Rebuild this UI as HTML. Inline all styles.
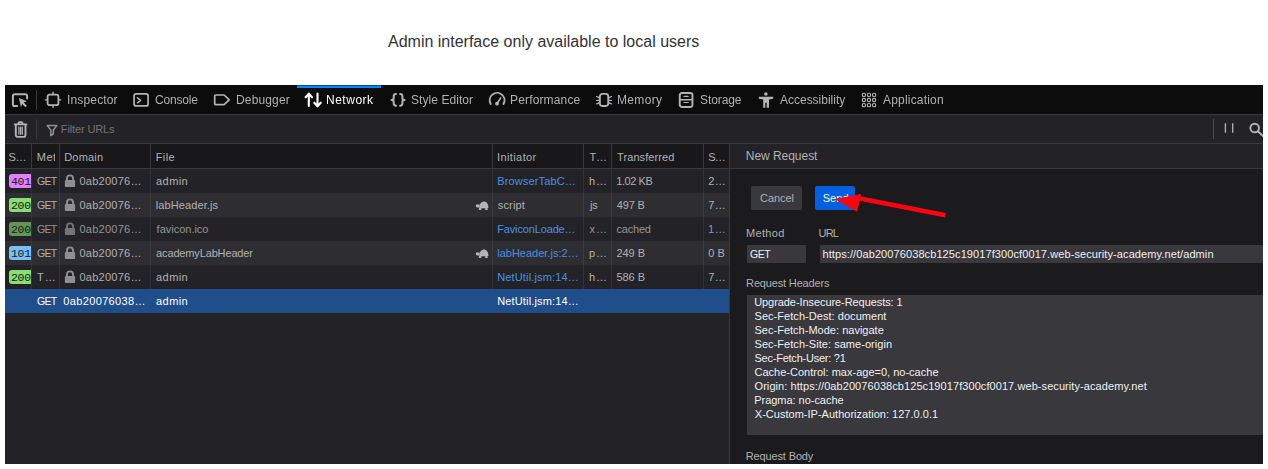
<!DOCTYPE html>
<html lang="en">
<head>
<meta charset="utf-8">
<title>Admin interface</title>
<style>
*{box-sizing:border-box;margin:0;padding:0}
html,body{width:1268px;height:469px;overflow:hidden;background:#fff}
body{font-family:"Liberation Sans",sans-serif;position:relative}
#msg{position:absolute;left:388px;top:32px;font-size:16px;line-height:19px;color:#333;white-space:nowrap}
.b{position:absolute}
.t{position:absolute;white-space:nowrap}
.st{position:absolute;left:9px;width:22px;height:14px;border-radius:3px 0 0 3px;font-family:"Liberation Mono",monospace;font-size:11.5px;line-height:15px;color:#18181a;overflow:hidden;padding-left:2px;letter-spacing:-0.3px}
svg{position:absolute;overflow:visible}
</style>
</head>
<body>
<div id="msg">Admin interface only available to local users</div>
<div class="b" style="left:5px;top:85px;width:1258px;height:379px;background:#232327;"></div>
<div class="b" style="left:5px;top:85px;width:1258px;height:29px;background:#0c0c0d;"></div>
<div class="b" style="left:5px;top:114px;width:1258px;height:1px;background:#38383d;"></div>
<div class="b" style="left:297px;top:85px;width:84px;height:3px;background:#0a84ff;"></div>
<div class="b" style="left:297px;top:85px;width:84px;height:1px;background:#0b4886;"></div>
<div class="b" style="left:36px;top:90px;width:1px;height:20px;background:#38383d;"></div>
<div class="b" style="left:5px;top:115px;width:1258px;height:28px;background:#232327;"></div>
<div class="b" style="left:5px;top:143px;width:1258px;height:1px;background:#38383d;"></div>
<div class="b" style="left:36px;top:119px;width:1px;height:20px;background:#38383d;"></div>
<div class="b" style="left:1213px;top:119px;width:1px;height:20px;background:#4a4a4f;"></div>
<div class="b" style="left:5px;top:144px;width:724px;height:24px;background:#18181a;"></div>
<div class="b" style="left:5px;top:168px;width:1258px;height:1px;background:#38383d;"></div>
<div class="b" style="left:5px;top:193px;width:724px;height:24px;background:#2e2e32;"></div>
<div class="b" style="left:5px;top:241px;width:724px;height:24px;background:#2e2e32;"></div>
<div class="b" style="left:5px;top:289px;width:724px;height:24px;background:#204e8a;"></div>
<div class="b" style="left:31px;top:144px;width:1px;height:24px;background:#38383d;"></div>
<div class="b" style="left:31px;top:169px;width:1px;height:120px;background:rgba(255,255,255,0.07);"></div>
<div class="b" style="left:59px;top:144px;width:1px;height:24px;background:#38383d;"></div>
<div class="b" style="left:59px;top:169px;width:1px;height:120px;background:rgba(255,255,255,0.07);"></div>
<div class="b" style="left:150px;top:144px;width:1px;height:24px;background:#38383d;"></div>
<div class="b" style="left:150px;top:169px;width:1px;height:120px;background:rgba(255,255,255,0.07);"></div>
<div class="b" style="left:492px;top:144px;width:1px;height:24px;background:#38383d;"></div>
<div class="b" style="left:492px;top:169px;width:1px;height:120px;background:rgba(255,255,255,0.07);"></div>
<div class="b" style="left:583px;top:144px;width:1px;height:24px;background:#38383d;"></div>
<div class="b" style="left:583px;top:169px;width:1px;height:120px;background:rgba(255,255,255,0.07);"></div>
<div class="b" style="left:611px;top:144px;width:1px;height:24px;background:#38383d;"></div>
<div class="b" style="left:611px;top:169px;width:1px;height:120px;background:rgba(255,255,255,0.07);"></div>
<div class="b" style="left:703px;top:144px;width:1px;height:24px;background:#38383d;"></div>
<div class="b" style="left:703px;top:169px;width:1px;height:120px;background:rgba(255,255,255,0.07);"></div>
<div class="b" style="left:729px;top:144px;width:1px;height:320px;background:#38383d;"></div>
<div class="b" style="left:730px;top:144px;width:533px;height:24px;background:#232327;"></div>
<div class="b" style="left:730px;top:169px;width:533px;height:295px;background:#1b1b1d;"></div>
<div class="b" style="left:751px;top:186px;width:51px;height:24px;background:#38383d;border-radius:2px;"></div>
<div class="b" style="left:815px;top:186px;width:40px;height:24px;background:#0060df;border-radius:2px;"></div>
<div class="b" style="left:747px;top:245px;width:59px;height:18px;background:#38383d;"></div>
<div class="b" style="left:820px;top:245px;width:443px;height:18px;background:#38383d;"></div>
<div class="b" style="left:747px;top:295px;width:516px;height:140px;background:#38383d;"></div>
<div class="st" style="top:174px;background:#df80ff;opacity:1">401</div>
<div class="st" style="top:198px;background:#86de74;opacity:1">200</div>
<div class="st" style="top:222px;background:#86de74;opacity:0.62">200</div>
<div class="st" style="top:246px;background:#75bfff;opacity:1">101</div>
<div class="st" style="top:270px;background:#86de74;opacity:1">200</div>
<svg style="left:12px;top:92px" width="16" height="16" viewBox="0 0 16 16"><path d="M5.2 14.1H2.800A1.900 1.900 0 0 1 .9 12.2V4.1A1.900 1.900 0 0 1 2.800 2.2h10.400a1.900 1.900 0 0 1 1.900 1.900v2.300" fill="none" stroke="#b4b4b6" stroke-linecap="round" stroke-linejoin="round" stroke-width="2"/><path d="M6.9 6l8 3.3-3.200 1.200 3.200 3.200-1.500 1.500-3.200-3.200-1.200 3.200z" fill="#b4b4b6"/></svg>
<svg style="left:45px;top:92px" width="16" height="16" viewBox="0 0 16 16"><rect x="2.6" y="2.6" width="10.8" height="10.6" rx="2" fill="none" stroke="#b4b4b6" stroke-linecap="round" stroke-linejoin="round" stroke-width="1.8"/><path d="M0.3 7.9h1.6M14.1 7.9h1.6M8 0.3v1.5M8 14v1.5" fill="none" stroke="#b4b4b6" stroke-linecap="round" stroke-linejoin="round" stroke-width="1.4"/></svg>
<svg style="left:133px;top:92px" width="16" height="16" viewBox="0 0 16 16"><rect x="1.1" y="1.9" width="14" height="12" rx="2" fill="none" stroke="#b4b4b6" stroke-linecap="round" stroke-linejoin="round" stroke-width="1.7"/><path d="M4.5 5.8L7.6 8.3 4.5 10.8" fill="none" stroke="#b4b4b6" stroke-linecap="round" stroke-linejoin="round" stroke-width="1.5"/></svg>
<svg style="left:214px;top:92px" width="16" height="16" viewBox="0 0 16 16"><path d="M1.7 3h8.4l5.1 4.8-5.1 4.8H1.7a1 1 0 0 1-1-1V4a1 1 0 0 1 1-1z" fill="none" stroke="#b4b4b6" stroke-linecap="round" stroke-linejoin="round" stroke-width="1.7"/></svg>
<svg style="left:305px;top:92px" width="16" height="16" viewBox="0 0 16 16"><path d="M3.8 14V1.7M0.6 5.3L3.8 1.6 7 5.3M12.5 1.6v12.7M9.3 10.7l3.2 3.7 3.2-3.7" fill="none" stroke="#fff" stroke-width="2.1" stroke-linecap="round" stroke-linejoin="round"/></svg>
<svg style="left:390px;top:92px" width="16" height="16" viewBox="0 0 16 16"><path d="M6 2.100C4.300 2.100 3.700 2.800 3.700 4.200V6.200C3.700 7.400 3 8 1.500 8 3 8 3.700 8.600 3.700 9.800V11.600C3.700 13 4.300 13.700 6 13.700M10.100 2.100C11.800 2.100 12.400 2.800 12.400 4.200V6.200C12.400 7.400 13.100 8 14.600 8 13.100 8 12.400 8.600 12.400 9.800V11.600C12.400 13 11.800 13.700 10.100 13.700" fill="none" stroke="#b4b4b6" stroke-linecap="round" stroke-linejoin="round" stroke-width="2"/></svg>
<svg style="left:489px;top:92px" width="16" height="16" viewBox="0 0 16 16"><path d="M1.7 12A7.4 7.4 0 1 1 14.5 12" fill="none" stroke="#b4b4b6" stroke-linecap="round" stroke-linejoin="round" stroke-width="1.9"/><path d="M8 11.7L11.7 5.9" fill="none" stroke="#b4b4b6" stroke-linecap="round" stroke-linejoin="round" stroke-width="1.6"/><circle cx="8" cy="11.7" r="1.9" fill="#b4b4b6"/></svg>
<svg style="left:596px;top:92px" width="16" height="16" viewBox="0 0 16 16"><rect x="3.9" y="1.9" width="8.3" height="12.1" rx="2.4" fill="none" stroke="#b4b4b6" stroke-linecap="round" stroke-linejoin="round" stroke-width="1.8"/><path d="M.6 4.500l2.400 1.100M.6 8.300h2.400M.6 11.900l2.400-1.100M15.500 4.500l-2.400 1.100M15.500 8.300h-2.400M15.500 11.900l-2.400-1.100" fill="none" stroke="#b4b4b6" stroke-linecap="round" stroke-linejoin="round" stroke-width="1.3"/></svg>
<svg style="left:678px;top:92px" width="16" height="16" viewBox="0 0 16 16"><rect x="1.75" y="1" width="12.7" height="14" rx="2.2" fill="none" stroke="#b4b4b6" stroke-linecap="round" stroke-linejoin="round" stroke-width="1.9"/><path d="M1.75 7.8h12.7" fill="none" stroke="#b4b4b6" stroke-linecap="round" stroke-linejoin="round" stroke-width="1.4"/><path d="M6 4.4h4.200M6 10.500h4.200" fill="none" stroke="#b4b4b6" stroke-linecap="round" stroke-linejoin="round" stroke-width="1.2"/></svg>
<svg style="left:758px;top:92px" width="16" height="16" viewBox="0 0 16 16"><circle cx="7.9" cy="1.9" r="1.75" fill="#b4b4b6"/><path d="M.8 4.700h14.400v2.100l-4.200.6v8.400H8.700v-5.100H7.300v5.100H5.200V7.400L.8 6.800z" fill="#b4b4b6"/></svg>
<svg style="left:861px;top:92px" width="16" height="16" viewBox="0 0 16 16"><rect x="1.3" y="1.3" width="3.2" height="3.2" rx="1.3" fill="none" stroke="#b4b4b6" stroke-linecap="round" stroke-linejoin="round" stroke-width="1.1"/><rect x="1.3" y="6.4" width="3.2" height="3.2" rx="1.3" fill="none" stroke="#b4b4b6" stroke-linecap="round" stroke-linejoin="round" stroke-width="1.1"/><rect x="1.3" y="11.5" width="3.2" height="3.2" rx="1.3" fill="none" stroke="#b4b4b6" stroke-linecap="round" stroke-linejoin="round" stroke-width="1.1"/><rect x="6.4" y="1.3" width="3.2" height="3.2" rx="1.3" fill="none" stroke="#b4b4b6" stroke-linecap="round" stroke-linejoin="round" stroke-width="1.1"/><rect x="6.4" y="6.4" width="3.2" height="3.2" rx="1.3" fill="none" stroke="#b4b4b6" stroke-linecap="round" stroke-linejoin="round" stroke-width="1.1"/><rect x="6.4" y="11.5" width="3.2" height="3.2" rx="1.3" fill="none" stroke="#b4b4b6" stroke-linecap="round" stroke-linejoin="round" stroke-width="1.1"/><rect x="11.5" y="1.3" width="3.2" height="3.2" rx="1.3" fill="none" stroke="#b4b4b6" stroke-linecap="round" stroke-linejoin="round" stroke-width="1.1"/><rect x="11.5" y="6.4" width="3.2" height="3.2" rx="1.3" fill="none" stroke="#b4b4b6" stroke-linecap="round" stroke-linejoin="round" stroke-width="1.1"/><rect x="11.5" y="11.5" width="3.2" height="3.2" rx="1.3" fill="none" stroke="#b4b4b6" stroke-linecap="round" stroke-linejoin="round" stroke-width="1.1"/></svg>
<svg style="left:12px;top:121px" width="16" height="17" viewBox="0 0 16 17"><path d="M2.700 3.400h11.700M6.600 3.200v-1A1.100 1.100 0 0 1 7.700 1.100h1.700a1.100 1.100 0 0 1 1.100 1.100v1M3.800 3.600V14a1.9 1.9 0 0 0 1.9 1.9h5.9A1.9 1.9 0 0 0 13.5 14V3.6" fill="none" stroke="#b4b4b6" stroke-linecap="round" stroke-linejoin="round" stroke-width="1.9"/><path d="M6.9 6v7.2M8.6 6v7.2M10.3 6v7.2" fill="none" stroke="#b4b4b6" stroke-linecap="round" stroke-linejoin="round" stroke-width="1.2"/></svg>
<svg style="left:46px;top:123.5px" width="12" height="13" viewBox="0 0 12 13"><path d="M1.3 1.6h9.5L7.3 6v4L4.8 11.5V6z" fill="none" stroke="#8f8f94" stroke-width="1.5" stroke-linejoin="round"/></svg>
<svg style="left:1220px;top:120px" width="16" height="16" viewBox="0 0 16 16"><path d="M5.4 3.2v9.6M12.7 3.2v9.6" fill="none" stroke="#b4b4b6" stroke-width="1.3"/></svg>
<svg style="overflow:hidden;left:1246px;top:120px" width="17" height="18" viewBox="0 0 17 18"><circle cx="8.7" cy="8" r="4.3" fill="none" stroke="#b4b4b6" stroke-linecap="round" stroke-linejoin="round" stroke-width="1.9"/><path d="M11.8 11.2l6 5.6" fill="none" stroke="#b4b4b6" stroke-linecap="round" stroke-linejoin="round" stroke-width="1.9"/></svg>
<svg style="left:64px;top:174px" width="12" height="14" viewBox="0 0 12 14"><g opacity="1"><rect x="0.9" y="6.1" width="10.2" height="6.9" rx="0.8" fill="#8f8f91"/><path d="M2.95 6.5V4.4a3.05 3.05 0 0 1 6.1 0v2.1" fill="none" stroke="#8f8f91" stroke-width="1.9"/></g></svg>
<svg style="left:64px;top:198px" width="12" height="14" viewBox="0 0 12 14"><g opacity="1"><rect x="0.9" y="6.1" width="10.2" height="6.9" rx="0.8" fill="#8f8f91"/><path d="M2.95 6.5V4.4a3.05 3.05 0 0 1 6.1 0v2.1" fill="none" stroke="#8f8f91" stroke-width="1.9"/></g></svg>
<svg style="left:64px;top:222px" width="12" height="14" viewBox="0 0 12 14"><g opacity="0.75"><rect x="0.9" y="6.1" width="10.2" height="6.9" rx="0.8" fill="#8f8f91"/><path d="M2.95 6.5V4.4a3.05 3.05 0 0 1 6.1 0v2.1" fill="none" stroke="#8f8f91" stroke-width="1.9"/></g></svg>
<svg style="left:64px;top:246px" width="12" height="14" viewBox="0 0 12 14"><g opacity="1"><rect x="0.9" y="6.1" width="10.2" height="6.9" rx="0.8" fill="#8f8f91"/><path d="M2.95 6.5V4.4a3.05 3.05 0 0 1 6.1 0v2.1" fill="none" stroke="#8f8f91" stroke-width="1.9"/></g></svg>
<svg style="left:64px;top:270px" width="12" height="14" viewBox="0 0 12 14"><g opacity="1"><rect x="0.9" y="6.1" width="10.2" height="6.9" rx="0.8" fill="#8f8f91"/><path d="M2.95 6.5V4.4a3.05 3.05 0 0 1 6.1 0v2.1" fill="none" stroke="#8f8f91" stroke-width="1.9"/></g></svg>
<svg style="left:475px;top:199.6px" width="14" height="11" viewBox="0 0 14 11"><path d="M4.4 8.1c-.3-3.6 1.9-6.5 4.6-6.5 2.6 0 4.6 2.7 4.4 6.4l-.8.1V10h-2.4V8.2H6.3V10H3.9V8.1zM0.8 5.7c0-1 .9-1.7 1.9-1.5l1.9.6-.5 2.6H2.4C1.500 7.4.8 6.700.8 5.700z" fill="#b4b4b6"/></svg>
<svg style="left:475px;top:247.6px" width="14" height="11" viewBox="0 0 14 11"><path d="M4.4 8.1c-.3-3.6 1.9-6.5 4.6-6.5 2.6 0 4.6 2.7 4.4 6.4l-.8.1V10h-2.4V8.2H6.3V10H3.9V8.1zM0.8 5.7c0-1 .9-1.7 1.9-1.5l1.9.6-.5 2.6H2.4C1.500 7.4.8 6.700.8 5.700z" fill="#b4b4b6"/></svg>
<div class="t" style="left:66.5px;top:93.0px;font-size:12px;line-height:14px;color:#b1b1b3;letter-spacing:0.156px;will-change:transform;">Inspector</div>
<div class="t" style="left:154.9px;top:93.0px;font-size:12px;line-height:14px;color:#b1b1b3;letter-spacing:-0.200px;will-change:transform;">Console</div>
<div class="t" style="left:235.6px;top:93.0px;font-size:12px;line-height:14px;color:#b1b1b3;letter-spacing:0.143px;will-change:transform;">Debugger</div>
<div class="t" style="left:326.4px;top:93.0px;font-size:12px;line-height:14px;color:#ffffff;letter-spacing:0.517px;will-change:transform;">Network</div>
<div class="t" style="left:411.0px;top:93.0px;font-size:12px;line-height:14px;color:#b1b1b3;letter-spacing:0.068px;will-change:transform;">Style Editor</div>
<div class="t" style="left:510.2px;top:93.0px;font-size:12px;line-height:14px;color:#b1b1b3;letter-spacing:0.155px;will-change:transform;">Performance</div>
<div class="t" style="left:617.3px;top:93.0px;font-size:12px;line-height:14px;color:#b1b1b3;letter-spacing:0.350px;will-change:transform;">Memory</div>
<div class="t" style="left:700.2px;top:93.0px;font-size:12px;line-height:14px;color:#b1b1b3;letter-spacing:-0.083px;will-change:transform;">Storage</div>
<div class="t" style="left:780.0px;top:93.0px;font-size:12px;line-height:14px;color:#b1b1b3;letter-spacing:-0.012px;will-change:transform;">Accessibility</div>
<div class="t" style="left:883.3px;top:93.0px;font-size:12px;line-height:14px;color:#b1b1b3;letter-spacing:0.190px;will-change:transform;">Application</div>
<div class="t" style="left:60.8px;top:122.0px;font-size:11px;line-height:14px;color:#737378;letter-spacing:-0.130px;">Filter URLs</div>
<div class="t" style="left:8.6px;top:149.5px;font-size:11px;line-height:14px;color:#b1b1b3;letter-spacing:-0.400px;">S…</div>
<div class="t" style="left:36.8px;top:149.5px;font-size:11px;line-height:14px;color:#b1b1b3;letter-spacing:0.500px;width:17.8px;overflow:hidden;">Meth</div>
<div class="t" style="left:64.2px;top:149.5px;font-size:11px;line-height:14px;color:#b1b1b3;letter-spacing:0.200px;">Domain</div>
<div class="t" style="left:155.8px;top:149.5px;font-size:11px;line-height:14px;color:#b1b1b3;letter-spacing:0.333px;">File</div>
<div class="t" style="left:497.0px;top:149.5px;font-size:11px;line-height:14px;color:#b1b1b3;letter-spacing:0.400px;">Initiator</div>
<div class="t" style="left:589.5px;top:149.5px;font-size:11px;line-height:14px;color:#b1b1b3;letter-spacing:-0.100px;">T…</div>
<div class="t" style="left:617.0px;top:149.5px;font-size:11px;line-height:14px;color:#b1b1b3;letter-spacing:0.100px;">Transferred</div>
<div class="t" style="left:708.3px;top:149.5px;font-size:11px;line-height:14px;color:#b1b1b3;letter-spacing:-0.800px;">S…</div>
<div class="t" style="left:745.8px;top:148.5px;font-size:12px;line-height:14px;color:#b1b1b3;letter-spacing:-0.040px;">New Request</div>
<div class="t" style="left:37.1px;top:173.5px;font-size:10.5px;line-height:14px;color:#b1b1b3;letter-spacing:-0.700px;">GET</div>
<div class="t" style="left:79.5px;top:173.5px;font-size:11px;line-height:14px;color:#b1b1b3;letter-spacing:0.250px;">0ab20076…</div>
<div class="t" style="left:156.1px;top:173.5px;font-size:11px;line-height:14px;color:#b1b1b3;letter-spacing:0.413px;">admin</div>
<div class="t" style="left:497.2px;top:173.5px;font-size:11px;line-height:14px;color:#4a90e2;letter-spacing:0.150px;">BrowserTabC…</div>
<div class="t" style="left:589.0px;top:173.5px;font-size:11px;line-height:14px;color:#b1b1b3;letter-spacing:0.900px;">h…</div>
<div class="t" style="left:616.2px;top:173.5px;font-size:11px;line-height:14px;color:#b1b1b3;letter-spacing:-0.417px;">1.02 KB</div>
<div class="t" style="left:708.3px;top:173.5px;font-size:11px;line-height:14px;color:#b1b1b3;letter-spacing:0.450px;">2…</div>
<div class="t" style="left:37.1px;top:197.5px;font-size:10.5px;line-height:14px;color:#b1b1b3;letter-spacing:-0.700px;">GET</div>
<div class="t" style="left:79.5px;top:197.5px;font-size:11px;line-height:14px;color:#b1b1b3;letter-spacing:0.250px;">0ab20076…</div>
<div class="t" style="left:155.8px;top:197.5px;font-size:11px;line-height:14px;color:#b1b1b3;letter-spacing:0.100px;">labHeader.js</div>
<div class="t" style="left:497.8px;top:197.5px;font-size:11px;line-height:14px;color:#b1b1b3;letter-spacing:0.140px;">script</div>
<div class="t" style="left:590.0px;top:197.5px;font-size:11px;line-height:14px;color:#b1b1b3;letter-spacing:-0.250px;">js</div>
<div class="t" style="left:616.8px;top:197.5px;font-size:11px;line-height:14px;color:#b1b1b3;letter-spacing:-0.150px;">497 B</div>
<div class="t" style="left:708.3px;top:197.5px;font-size:11px;line-height:14px;color:#b1b1b3;letter-spacing:0.450px;">7…</div>
<div class="t" style="left:37.1px;top:221.5px;font-size:10.5px;line-height:14px;color:#b1b1b3;letter-spacing:-0.700px;opacity:.8;">GET</div>
<div class="t" style="left:79.5px;top:221.5px;font-size:11px;line-height:14px;color:#b1b1b3;letter-spacing:0.250px;opacity:.8;">0ab20076…</div>
<div class="t" style="left:156.6px;top:221.5px;font-size:11px;line-height:14px;color:#b1b1b3;letter-spacing:-0.010px;opacity:.8;">favicon.ico</div>
<div class="t" style="left:497.2px;top:221.5px;font-size:11px;line-height:14px;color:#4a90e2;letter-spacing:-0.142px;">FaviconLoade…</div>
<div class="t" style="left:589.5px;top:221.5px;font-size:11px;line-height:14px;color:#b1b1b3;letter-spacing:1.000px;opacity:.8;">x…</div>
<div class="t" style="left:616.5px;top:221.5px;font-size:11px;line-height:14px;color:#b1b1b3;letter-spacing:-0.210px;opacity:.8;">cached</div>
<div class="t" style="left:708.0px;top:221.5px;font-size:11px;line-height:14px;color:#b1b1b3;letter-spacing:0.700px;opacity:.8;">1…</div>
<div class="t" style="left:37.1px;top:245.5px;font-size:10.5px;line-height:14px;color:#b1b1b3;letter-spacing:-0.700px;">GET</div>
<div class="t" style="left:79.5px;top:245.5px;font-size:11px;line-height:14px;color:#b1b1b3;letter-spacing:0.250px;">0ab20076…</div>
<div class="t" style="left:156.1px;top:245.5px;font-size:11px;line-height:14px;color:#b1b1b3;letter-spacing:-0.147px;">academyLabHeader</div>
<div class="t" style="left:497.2px;top:245.5px;font-size:11px;line-height:14px;color:#4a90e2;letter-spacing:0.004px;">labHeader.js:2…</div>
<div class="t" style="left:589.0px;top:245.5px;font-size:11px;line-height:14px;color:#b1b1b3;letter-spacing:0.900px;">p…</div>
<div class="t" style="left:616.5px;top:245.5px;font-size:11px;line-height:14px;color:#b1b1b3;letter-spacing:-0.062px;">249 B</div>
<div class="t" style="left:708.3px;top:245.5px;font-size:11px;line-height:14px;color:#b1b1b3;letter-spacing:0.000px;">0 B</div>
<div class="t" style="left:37.1px;top:269.5px;font-size:11px;line-height:14px;color:#b1b1b3;letter-spacing:1.000px;">T…</div>
<div class="t" style="left:79.5px;top:269.5px;font-size:11px;line-height:14px;color:#b1b1b3;letter-spacing:0.250px;">0ab20076…</div>
<div class="t" style="left:156.1px;top:269.5px;font-size:11px;line-height:14px;color:#b1b1b3;letter-spacing:0.413px;">admin</div>
<div class="t" style="left:497.2px;top:269.5px;font-size:11px;line-height:14px;color:#4a90e2;letter-spacing:0.146px;">NetUtil.jsm:14…</div>
<div class="t" style="left:589.0px;top:269.5px;font-size:11px;line-height:14px;color:#b1b1b3;letter-spacing:0.900px;">h…</div>
<div class="t" style="left:616.5px;top:269.5px;font-size:11px;line-height:14px;color:#b1b1b3;letter-spacing:-0.062px;">586 B</div>
<div class="t" style="left:708.3px;top:269.5px;font-size:11px;line-height:14px;color:#b1b1b3;letter-spacing:0.450px;">7…</div>
<div class="t" style="left:37.1px;top:293.5px;font-size:10.5px;line-height:14px;color:#ffffff;letter-spacing:-0.700px;">GET</div>
<div class="t" style="left:63.3px;top:293.5px;font-size:11px;line-height:14px;color:#ffffff;letter-spacing:0.355px;">0ab20076038…</div>
<div class="t" style="left:156.1px;top:293.5px;font-size:11px;line-height:14px;color:#ffffff;letter-spacing:0.413px;">admin</div>
<div class="t" style="left:497.2px;top:293.5px;font-size:11px;line-height:14px;color:#ffffff;letter-spacing:0.146px;">NetUtil.jsm:14…</div>
<div class="t" style="left:760.0px;top:190.5px;font-size:11px;line-height:14px;color:#b1b1b3;letter-spacing:-0.040px;">Cancel</div>
<div class="t" style="left:822.7px;top:190.5px;font-size:11px;line-height:14px;color:#ffffff;letter-spacing:0.100px;">Send</div>
<div class="t" style="left:746.1px;top:225.5px;font-size:11px;line-height:14px;color:#b1b1b3;letter-spacing:0.310px;">Method</div>
<div class="t" style="left:818.5px;top:225.5px;font-size:11px;line-height:14px;color:#b1b1b3;letter-spacing:-0.800px;">URL</div>
<div class="t" style="left:750.0px;top:246.5px;font-size:10.5px;line-height:14px;color:#f0f0f2;letter-spacing:-0.500px;">GET</div>
<div class="t" style="left:822.5px;top:246.5px;font-size:11px;line-height:14px;color:#f0f0f2;letter-spacing:0.094px;">https://0ab20076038cb125c19017f300cf0017.web-security-academy.net/admin</div>
<div class="t" style="left:746.1px;top:275.5px;font-size:11px;line-height:14px;color:#b1b1b3;letter-spacing:-0.157px;">Request Headers</div>
<div class="t" style="left:754.2px;top:294.7px;font-size:11px;line-height:14px;color:#f0f0f2;letter-spacing:-0.072px;">Upgrade-Insecure-Requests: 1</div>
<div class="t" style="left:754.5px;top:308.7px;font-size:11px;line-height:14px;color:#f0f0f2;letter-spacing:0.046px;">Sec-Fetch-Dest: document</div>
<div class="t" style="left:754.5px;top:322.7px;font-size:11px;line-height:14px;color:#f0f0f2;letter-spacing:0.013px;">Sec-Fetch-Mode: navigate</div>
<div class="t" style="left:754.5px;top:336.7px;font-size:11px;line-height:14px;color:#f0f0f2;letter-spacing:0.048px;">Sec-Fetch-Site: same-origin</div>
<div class="t" style="left:754.5px;top:350.7px;font-size:11px;line-height:14px;color:#f0f0f2;letter-spacing:-0.235px;">Sec-Fetch-User: ?1</div>
<div class="t" style="left:754.5px;top:364.7px;font-size:11px;line-height:14px;color:#f0f0f2;letter-spacing:0.008px;">Cache-Control: max-age=0, no-cache</div>
<div class="t" style="left:754.5px;top:378.7px;font-size:11px;line-height:14px;color:#f0f0f2;letter-spacing:0.074px;">Origin: https://0ab20076038cb125c19017f300cf0017.web-security-academy.net</div>
<div class="t" style="left:754.2px;top:392.7px;font-size:11px;line-height:14px;color:#f0f0f2;letter-spacing:-0.030px;">Pragma: no-cache</div>
<div class="t" style="left:754.8px;top:406.7px;font-size:11px;line-height:14px;color:#f0f0f2;letter-spacing:0.014px;">X-Custom-IP-Authorization: 127.0.0.1</div>
<div class="t" style="left:745.8px;top:449.3px;font-size:11px;line-height:14px;color:#b1b1b3;letter-spacing:-0.141px;">Request Body</div>
<svg style="left:820px;top:185px" width="140" height="45" viewBox="0 0 140 45"><path d="M125.5 30.2L40 13.4" stroke="#fb0410" stroke-width="4.6" fill="none"/><path d="M14.600 14L41 9l-3.800 17.700z" fill="#fb0410"/></svg>
</body>
</html>
